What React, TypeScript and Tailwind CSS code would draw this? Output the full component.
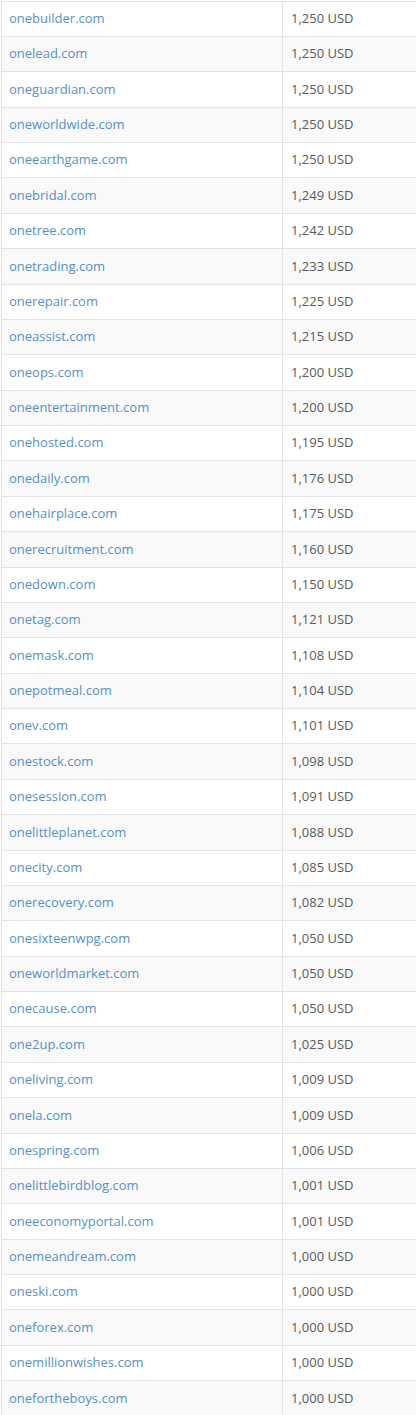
const rows: [string, string][] = [
  ["onebuilder.com", "1,250"],
  ["onelead.com", "1,250"],
  ["oneguardian.com", "1,250"],
  ["oneworldwide.com", "1,250"],
  ["oneearthgame.com", "1,250"],
  ["onebridal.com", "1,249"],
  ["onetree.com", "1,242"],
  ["onetrading.com", "1,233"],
  ["onerepair.com", "1,225"],
  ["oneassist.com", "1,215"],
  ["oneops.com", "1,200"],
  ["oneentertainment.com", "1,200"],
  ["onehosted.com", "1,195"],
  ["onedaily.com", "1,176"],
  ["onehairplace.com", "1,175"],
  ["onerecruitment.com", "1,160"],
  ["onedown.com", "1,150"],
  ["onetag.com", "1,121"],
  ["onemask.com", "1,108"],
  ["onepotmeal.com", "1,104"],
  ["onev.com", "1,101"],
  ["onestock.com", "1,098"],
  ["onesession.com", "1,091"],
  ["onelittleplanet.com", "1,088"],
  ["onecity.com", "1,085"],
  ["onerecovery.com", "1,082"],
  ["onesixteenwpg.com", "1,050"],
  ["oneworldmarket.com", "1,050"],
  ["onecause.com", "1,050"],
  ["one2up.com", "1,025"],
  ["oneliving.com", "1,009"],
  ["onela.com", "1,009"],
  ["onespring.com", "1,006"],
  ["onelittlebirdblog.com", "1,001"],
  ["oneeconomyportal.com", "1,001"],
  ["onemeandream.com", "1,000"],
  ["oneski.com", "1,000"],
  ["oneforex.com", "1,000"],
  ["onemillionwishes.com", "1,000"],
  ["onefortheboys.com", "1,000"],
];

export default function App() {
  return (
    <div className="bg-white pl-px pt-[0.5px] font-['Open_Sans',sans-serif] text-[13px]">
      <table className="w-[415px] border-collapse table-fixed">
        <colgroup>
          <col className="w-[281px]" />
          <col />
        </colgroup>
        <tbody>
          {rows.map(([domain, price], i) => (
            <tr key={domain} className={i % 2 === 0 ? "h-[35.375px] bg-white" : "h-[35.375px] bg-[#f9f9f9]"}>
              <td className="border-l border-t border-[#e3e3e3] px-[7px] py-0 align-middle">
                <a href="#" className="text-[#5590cb] no-underline">
                  {domain}
                </a>
              </td>
              <td className="border-l border-t border-[#e3e3e3] px-2 py-0 align-middle text-[#5a5a5a]">
                {price} USD
              </td>
            </tr>
          ))}
        </tbody>
      </table>
    </div>
  );
}
